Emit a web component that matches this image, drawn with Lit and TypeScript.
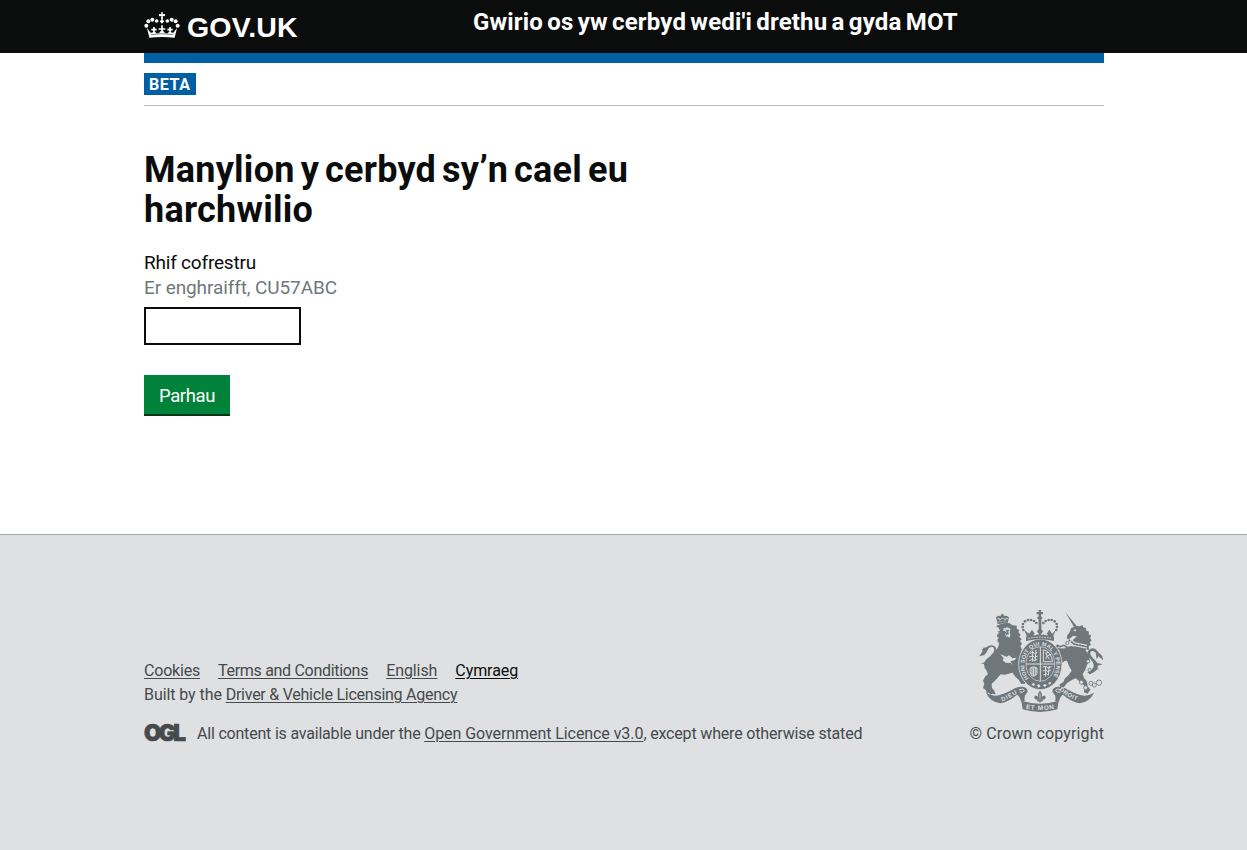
import { LitElement, html, css, svg } from "lit";
import { customElement } from "lit/decorators.js";

@customElement("gov-crown")
export class GovCrown extends LitElement {
  static styles = css`:host { display: block; width: 36px; height: 26px; } svg { display: block; }`;
  render() {
    return html`<svg width="36" height="26" viewBox="24 36 108 78" fill="#fff">
      <path d="M75 37h6l-1 6 7-1v7l-7-1 1 6-1 5 5 5-7 7-7-7 5-5-1-5 1-6-7 1v-7l7 1z"/>
      <circle cx="31" cy="77" r="6"/><circle cx="37" cy="64" r="6"/><circle cx="49" cy="59" r="6"/><circle cx="62" cy="63" r="5.5"/>
      <circle cx="125" cy="77" r="6"/><circle cx="119" cy="64" r="6"/><circle cx="107" cy="59" r="6"/><circle cx="94" cy="63" r="5.5"/>
      <path d="M33 84l11 14q5 1 8-3h5q3 6 9 5 6-1 8-7h8q2 6 8 7 6 1 9-5h5q3 4 8 3l11-14-7 29q-38-4-76 0z"/>
      <path d="M54 81v16M46 89h16M78 76v20M68 87h20M102 81v16M94 89h16" stroke="#fff" stroke-width="5"/>
      <path d="M45 104q33-6 66 0" fill="none" stroke="#0b0c0c" stroke-width="1.5"/>
    </svg>`;
  }
}

@customElement("royal-arms")
export class RoyalArms extends LitElement {
  static styles = css`
    :host { display: block; width: 125px; height: 102px; }
    svg { display: block; overflow: visible; width: 100%; height: 100%; }
    text { font-family: "Liberation Sans", sans-serif; font-weight: 700; fill: #dee0e2; }
  `;
  render() {
    const beads = [[190,90],[188,81],[189,72],[195,64],[204,60],[213,60],[222,63],[229,69],[250,69],[257,63],[266,60],[275,60],[284,64],[290,72],[291,81],[289,90]];
    return html`<svg viewBox="57 30 375 306" fill="#6f777b" stroke-linejoin="round">
      <path d="M108 52l7-5 6 2 3-6 2 0 2-2 2 2 3 6 7-2 7 5-5 20q-14-4-29 1z"/>
      <path d="M112 57l5-3 3 7 5-6 6 0 5 6 3-7 5 3" fill="none" stroke="#dee0e2" stroke-width="2.5"/>
      <path d="M113 67q14-4 27-1" fill="none" stroke="#dee0e2" stroke-width="2" stroke-dasharray="3 2"/>
      <path d="M108 78l15-6 25-3 8 6 15 3-1 8 8 4-3 7 7 7-4 6 7 8-5 4 6 9-5 8 5 9-4 9 7 9-4 12 6 14-4 13 3 16-6 2 3 13 7 6 2 9-12 1-8-13-10-9-8-12-8 2q-13 7-28 3-10 12-18 20l-9 8 1 13 7 8 4 11-10-2-5 4-5-7-7 2-2-9-9-7 4-13-4-9 7-13 8-6-6-15 2-16 9-16 10-14 10-11 7-13 1-10-5-4 1-7 4-3-6-4 1-8 7-3-7-4 8-3-4-8z"/>
      <path d="M131 84l5 1 4-3 8 2 3 4-2 9 2 9-3 9-4-6-5 2-4-9 4-4-4-5-5-1z" fill="#dee0e2"/>
      <path d="M136 88l5 3 3-3 4 3-4 4 3 8-6 1-1 4-4-6 4-5z"/>
      <path d="M120 162l19 8 9-4 9 9 12-2-7 10 1 16-11-10-15-1-9-7 3-7z" fill="#dee0e2"/>
      <path d="M151 184l15-4 14 9 13 1 8 8-7 1 5 6-9-1-4 6-13-11-11 3z"/>
      <path d="M91 214Q59 198 80 177Q107 158 102 145Q97 136 85 145L73 165L58 169L70 155L64 147L76 150L83 139Q98 131 107 142Q119 161 91 183Q76 195 99 205z"/>
      <path d="M70 143l18-3-10 20-20 9 9-14z"/>
      <path d="M62 190l17-4-3 7zM72 202l15 0-9 7zM89 174l13-8-6 14z"/>

      <path d="M316 37L353 82L346 88z"/>
      <path d="M333 85l16-7 11 1 7-4 3 7 9 3-2 6 10 4-1 8 8 4-4 7 5 8-6 5 4 8-7 3 1 12-8-2-4 9-13-7-16-7-14-13 6-10 14-11-13 1-14 8-5-3 2-9 7-9z"/>
      <path d="M340 91l7-3 2 5-6 1zM339 107l9 2-6 4-8 7-4-2z" fill="#dee0e2"/>
      <path d="M319 121l22 15 39 8M330 116l15 13 36 7" fill="none" stroke="#dee0e2" stroke-width="4"/>
      <path d="M326 119l17 13 34 8" fill="none" stroke="#6f777b" stroke-width="5" stroke-dasharray="6 3"/>
      <path d="M333 137l45 15 9 13 2 17-8 13-5 14-8 13 4 12 8 9 3 16 8 10-8 12-11-4 1-20-13-12-13-10-10 4-16 10-9 12-11 1-3-8 13-9 3-9 12-11 9-13-8-14-6-16-17 1-9-14 6-7-20-2-8 10-7-10 12-8 22 3-5-10 11 3z"/>
      <path d="M324 144l-12-8-12 4-8-4-3 7 8 5 13-1M324 159l-13 7-8 11-11-5-2 8 10 9 9-5 14-13" fill="none" stroke="#6f777b" stroke-width="5"/>
      <path d="M382 217Q413 204 394 181Q373 159 389 148Q403 139 415 157L426 167L430 181L415 169L410 178L407 158Q397 148 391 157Q388 166 407 182Q427 207 389 223z"/>
      <path d="M409 188l19 5-15 4zM402 205l17 1-20 6z"/>
      <g fill="#dee0e2" stroke="#6f777b" stroke-width="2.5">
        <circle cx="322" cy="129" r="5"/><circle cx="384" cy="184" r="5"/><circle cx="389" cy="210" r="5"/>
        <circle cx="364" cy="247" r="6"/><circle cx="377" cy="263" r="6"/><circle cx="393" cy="250" r="6"/><circle cx="403" cy="255" r="6"/><circle cx="417" cy="248" r="8"/>
      </g>

      <path d="M236 30h7v6h6v7h-6v6l5 5-8 9-9-9 5-5v-6h-6v-7h6z"/>
      <path d="M236 60h8v28l5 6-9 14-9-14 5-6z"/>
      ${beads.map(([x, y]) => svg`<circle cx=${x} cy=${y} r="4"/>`)}
      <path d="M192 90q7 12 10 24h76q3-12 10-24l-12 11-8-12-8 12 5 5q-8 2-15-3l-8 6-8-6q-8 5-15 3l5-5-8-12-8 12z"/>
      <ellipse cx="241" cy="193" rx="65" ry="76" stroke="#dee0e2" stroke-width="2.5"/>
      <path d="M198 110q42-10 84 0v13q-42-10-84 0z"/>
      <path d="M205 115q35-7 70 0" fill="none" stroke="#dee0e2" stroke-width="3" stroke-dasharray="5 3"/>
      <ellipse cx="241" cy="192" rx="43" ry="52" fill="none" stroke="#dee0e2" stroke-width="2"/>
      <path d="M241 141v102M199 192h84" stroke="#dee0e2" stroke-width="3"/>
      <g fill="none" stroke="#dee0e2" stroke-width="3">
        <path d="M210 161l9-5 5 5 8-4M207 171l11-3 5 4 10-4M208 182l10-4 5 4 9-4M218 152v33M228 150l-3 33"/>
        <path d="M250 149v36h27q0-13-8-24-7-9-19-12M256 158l12 20M257 177l4-9 12-5M258 159l8-2"/>
        <path d="M248 201l11-2 4 5 12-4M248 213l10-4 5 6 10-5M250 225l9-4 5 5M257 198v32M268 198l-3 27"/>
        <path d="M211 204q8-7 20 0v17q-9 13-18 3-5-9-2-20zM216 202v25M221 201v28M226 202v24"/>
      </g>
      <path id="garter" d="M207 236A48 58 0 1 1 275 236" fill="none"/>
      <text font-size="16.5"><textPath href="#garter" startOffset="1" textLength="246">HONI SOIT QUI MAL Y PENSE</textPath></text>
      <path d="M214 252l8-3 3 6-5 3zM230 256l7-3 5 5-6 5zM248 256l6-4 7 3-6 6zM265 248l7-3 1 6-6 3z" fill="#dee0e2"/>

      <path d="M78 278q21 13 41 7 29-9 45-20 22-9 34-1 10 9 0 18-6 5-4 21l-11 2q-3-16-12-21-22 20-50 26-31-5-43-32z"/>
      <path d="M402 278q-21 13-41 7-29-9-45-20-22-9-34-1-10 9 0 18 6 5 4 21l11 2q3-16 12-21 22 20 50 26 31-5 43-32z"/>
      <path d="M177 270q14-6 16 2-3 7-14 4M303 270q-14-6-16 2 3 7 14 4" fill="none" stroke="#dee0e2" stroke-width="3"/>
      <path d="M184 302Q240 320 296 302L292 328Q240 344 188 328z"/>
      <path id="leftMotto" d="M126 304Q152 296 177 275" fill="none"/>
      <path id="rightMotto" d="M297 270Q323 294 358 304" fill="none"/>
      <path id="baseMotto" d="M197 326Q240 334 285 326" fill="none"/>
      <text font-size="18"><textPath href="#leftMotto" textLength="52">DIEU</textPath></text>
      <text font-size="18"><textPath href="#rightMotto" textLength="62">DROIT</textPath></text>
      <text font-size="19"><textPath href="#baseMotto" textLength="86">ET MON</textPath></text>
      <path d="M240 272q10 11 4 20 12-11 13 0 0 7-8 7-5-1-6 1h6v4h-6l-3 5-3-5h-6v-4h6q-1-2-6-1-8 0-8-7 1-11 13 0-6-9 4-20z"/>
      <path d="M240 280v18" stroke="#dee0e2" stroke-width="2"/>
    </svg>`;
  }
}

@customElement("app-root")
export class AppRoot extends LitElement {
  static styles = css`
    :host { display: block; min-height: 850px; background: #fff; color: #0b0c0c; font-family: Roboto, "Liberation Sans", sans-serif; }
    * { box-sizing: border-box; }
    .wrap { width: 960px; margin-left: 144px; }
    .top { background: #0b0c0c; height: 53px; }
    .top .wrap { display: flex; }
    .brand { display: flex; width: 329px; padding-top: 12px; gap: 7px; color: #fff; text-decoration: none; }
    .name { font: 700 28.5px/30px "Liberation Sans", sans-serif; white-space: nowrap; letter-spacing: .15px; }
    .service { color: #fff; font-size: 24px; line-height: 30px; font-weight: 700; padding-top: 7px; white-space: nowrap; letter-spacing: .17px; word-spacing: -1.9px; }
    .bar { height: 10px; background: #005ea5; }
    .phase { height: 43px; padding: 10px 0; border-bottom: 1px solid #bfc1c3; }
    .beta { display: inline-block; width: 52px; height: 22px; background: #005ea5; color: #fff; font-weight: 700; font-size: 16px; line-height: 24px; padding-left: 5px; letter-spacing: .6px; }
    main { height: 428px; padding-top: 44px; }
    h1 { margin: 0; font-size: 36px; line-height: 40px; font-weight: 700; letter-spacing: .25px; word-spacing: -3.2px; }
    .field { padding-top: 20px; font-size: 19px; line-height: 25px; display: grid; justify-items: start; letter-spacing: -.2px; }
    .hint { color: #6f777b; letter-spacing: -.1px; }
    input { width: 157px; height: 38px; margin: 7px 0 30px; border: 2px solid #0b0c0c; border-radius: 0; padding: 4px; font: inherit; background: #fff; }
    button { width: 86px; height: 39px; border: 0; padding: 3px 0 0; background: #00823b; box-shadow: 0 2px 0 #003618; color: #fff; font: inherit; font-size: 18.5px; letter-spacing: -.4px; }
    footer { height: 316px; background: #dee0e2; border-top: 1px solid #a1acb2; color: #454a4c; font-size: 16px; line-height: 24px; }
    footer .wrap { display: flex; justify-content: space-between; padding-top: 75px; }
    .meta { padding-top: 49px; }
    .links { display: flex; gap: 18px; letter-spacing: -.2px; }
    .links .terms { letter-spacing: -.3px; }
    .links .lang { letter-spacing: -.08px; }
    .built { letter-spacing: -.08px; }
    .built a { letter-spacing: -.25px; }
    .licence { display: flex; padding-top: 15px; }
    .licence-text { letter-spacing: -.2px; }
    .licence-text a { letter-spacing: -.07px; }
    .licence-text .rest { letter-spacing: -.17px; }
    a { color: inherit; text-underline-offset: 2px; text-decoration-thickness: 1px; }
    .here { color: #0b0c0c; }
    .ogl { width: 53px; font: 900 22.5px/21px Inter, sans-serif; letter-spacing: -2.6px; -webkit-text-stroke: .7px #454a4c; }
    .crown { letter-spacing: .12px; }
    .crown royal-arms { margin: 0 0 10px auto; }
  `;
  render() {
    return html`
      <header class="top"><div class="wrap"><a class="brand"><gov-crown></gov-crown><span class="name">GOV.UK</span></a><div class="service">Gwirio os yw cerbyd wedi'i drethu a gyda MOT</div></div></header>
      <div class="wrap">
        <div class="bar"></div>
        <div class="phase"><span class="beta">BETA</span></div>
        <main>
          <h1>Manylion y cerbyd sy’n cael eu<br>harchwilio</h1>
          <div class="field"><label for="reg">Rhif cofrestru</label><span class="hint">Er enghraifft, CU57ABC</span><input id="reg"><button>Parhau</button></div>
        </main>
      </div>
      <footer><div class="wrap">
        <div class="meta">
          <div class="links"><a href="#">Cookies</a><a href="#" class="terms">Terms and Conditions</a><a href="#" class="lang">English</a><a href="#" class="lang here">Cymraeg</a></div>
          <div class="built">Built by the <a href="#">Driver &amp; Vehicle Licensing Agency</a></div>
          <div class="licence"><span class="ogl">OGL</span><span class="licence-text">All content is available under the <a href="#">Open Government Licence v3.0</a><span class="rest">, except where otherwise stated</span></span></div>
        </div>
        <div class="crown"><royal-arms></royal-arms>© Crown copyright</div>
      </div></footer>`;
  }
}
